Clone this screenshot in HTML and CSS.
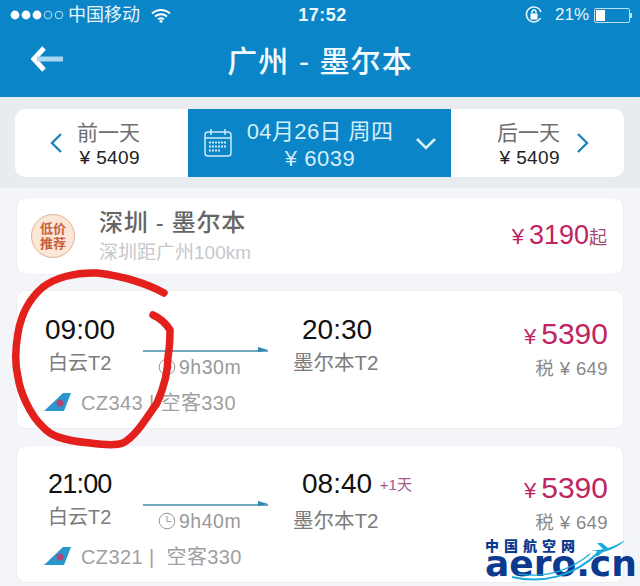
FILE: index.html
```html
<!DOCTYPE html>
<html lang="zh">
<head>
<meta charset="utf-8">
<title>广州 - 墨尔本</title>
<link rel="stylesheet" href="styles.css">
</head>
<body>
<div class="screen">
  <header class="head">
    <div class="status">
      <div class="status-left">
        <svg class="dots" width="54" height="12" viewBox="0 0 54 12"><circle cx="5" cy="6" r="4.4" fill="#fff"/><circle cx="16" cy="6" r="4.4" fill="#fff"/><circle cx="27" cy="6" r="4.4" fill="#fff"/><circle cx="38" cy="6" r="3.8" fill="none" stroke="#bfe0f2"/><circle cx="49" cy="6" r="3.8" fill="none" stroke="#bfe0f2"/></svg>
        <span class="carrier">中国移动</span>
        <svg class="wifi" width="20" height="15" viewBox="0 0 20 15"><path d="M1 5.500C6 .8 14 .8 19 5.500M4 8.600c3.500-3 8.500-3 12 0M7 11.300c1.800-1.300 4.200-1.300 6 0" fill="none" stroke="#fff" stroke-width="2"/><circle cx="10" cy="13.300" r="1.500" fill="#fff"/></svg>
      </div>
      <div class="clock">17:52</div>
      <div class="status-right">
        <svg width="20" height="20" viewBox="0 0 20 20"><path d="M16.500 13A7.500 7.500 0 1 1 17 7" fill="none" stroke="#e8f5fc" stroke-width="1.500"/><rect x="6.500" y="8.500" width="7" height="6" fill="#fff"/><path d="M8 8.500V7a2 2 0 0 1 4 0v1.500" fill="none" stroke="#fff" stroke-width="1.300"/></svg>
        <span class="pct">21%</span>
        <div class="battery"><div class="battery-fill"></div></div>
        <div class="battery-tip"></div>
      </div>
    </div>
    <div class="nav">
      <svg class="back" width="32" height="26" viewBox="0 0 32 26"><path d="M13 2 3 13l10 11" fill="none" stroke="#fff" stroke-width="5"/><path d="M6 13h26" stroke="#a9d6f0" stroke-width="5"/></svg>
      <h1 class="title">广州 - 墨尔本</h1>
    </div>
  </header>

  <div class="datewrap">
    <section class="datebar">
      <div class="day day-prev">
        <svg width="14" height="22" viewBox="0 0 14 22"><path d="M12 2 3 11l9 9" fill="none" stroke="#1c86b8" stroke-width="2.400"/></svg>
        <div class="day-text"><div class="day-name">前一天</div><div class="day-price">¥ 5409</div></div>
      </div>
      <div class="day-current">
        <svg width="30" height="30" viewBox="0 0 30 30"><rect x="2" y="4" width="26" height="24" rx="3" fill="none" stroke="#cfe9f7" stroke-width="1.500"/><path d="M2 10h26M8 1v6M22 1v6" fill="none" stroke="#cfe9f7" stroke-width="1.500"/><path d="M6 14.500h18M6 18.500h18M6 22.500h12" stroke="#cfe9f7" stroke-width="2.200" stroke-dasharray="2 1"/></svg>
        <div class="current-text"><div class="current-date">04月26日 周四</div><div class="current-price">¥ 6039</div></div>
        <svg class="chev" width="22" height="14" viewBox="0 0 22 14"><path d="M2 2l9 9 9-9" fill="none" stroke="#d8eef9" stroke-width="2.600"/></svg>
      </div>
      <div class="day day-next">
        <div class="day-text"><div class="day-name">后一天</div><div class="day-price">¥ 5409</div></div>
        <svg width="14" height="22" viewBox="0 0 14 22"><path d="M2 2l9 9-9 9" fill="none" stroke="#1c86b8" stroke-width="2.400"/></svg>
      </div>
    </section>
  </div>

  <section class="card promo">
    <div class="badge"><span>低价</span><span>推荐</span></div>
    <div class="promo-text">
      <div class="promo-route">深圳 - 墨尔本</div>
      <div class="promo-sub">深圳距广州100km</div>
    </div>
    <div class="promo-price"><span class="yen">¥</span><span class="promo-num">3190</span><span class="qi">起</span></div>
  </section>

  <section class="card flight">
    <div class="col-dep">
      <div class="time">09:00</div>
      <div class="place">白云T2</div>
      <div class="air">
        <svg class="tail" width="28" height="20" viewBox="0 0 28 20"><path d="M0 19 19 1h8l-7 18z" fill="#2a97cc"/><circle cx="16" cy="11" r="3.500" fill="#b0457a"/></svg>
        <span class="air-text">CZ343 | 空客330</span>
      </div>
    </div>
    <div class="col-mid">
      <div class="line"></div>
      <div class="dur"><svg width="18" height="18" viewBox="0 0 18 18"><circle cx="9" cy="9" r="7.800" fill="none" stroke="#999" stroke-width="1"/><path d="M9 4v5.500h4.500" fill="none" stroke="#999"/></svg><span>9h30m</span></div>
    </div>
    <div class="col-arr">
      <div class="time">20:30</div>
      <div class="place">墨尔本T2</div>
    </div>
    <div class="col-price">
      <div class="price"><span class="yen big">¥</span><span class="price-num">5390</span></div>
      <div class="tax">税 ¥ 649</div>
    </div>
  </section>

  <section class="card flight">
    <div class="col-dep">
      <div class="time">21:00</div>
      <div class="place">白云T2</div>
      <div class="air">
        <svg class="tail" width="28" height="20" viewBox="0 0 28 20"><path d="M0 19 19 1h8l-7 18z" fill="#2a97cc"/><circle cx="16" cy="11" r="3.500" fill="#b0457a"/></svg>
        <span class="air-text">CZ321 |&nbsp; 空客330</span>
      </div>
    </div>
    <div class="col-mid">
      <div class="line"></div>
      <div class="dur"><svg width="18" height="18" viewBox="0 0 18 18"><circle cx="9" cy="9" r="7.800" fill="none" stroke="#999" stroke-width="1"/><path d="M9 4v5.500h4.500" fill="none" stroke="#999"/></svg><span>9h40m</span></div>
    </div>
    <div class="col-arr">
      <div class="time">08:40 <span class="plus">+1天</span></div>
      <div class="place">墨尔本T2</div>
    </div>
    <div class="col-price">
      <div class="price"><span class="yen big">¥</span><span class="price-num">5390</span></div>
      <div class="tax">税 ¥ 649</div>
    </div>
  </section>

  <svg class="scribble" width="190" height="190" viewBox="0 260 190 190"><path d="M164 293C150 285 125 276 97 273 75 272 55 278 43 287 30 298 21 315 18 333 15 350 15 365 18 377 20 392 30 415 43 427 50 435 60 440 90 443 105 445 118 445 123 443 135 437 145 420 157 403 165 385 168 370 168 357 170 345 170 335 170 330 165 322 160 318 153 315" fill="none" stroke="#e3201b" stroke-width="7.500" stroke-linecap="round" stroke-linejoin="round"/></svg>

  <div class="mark">
    <div class="mark-cn">中国航空网</div>
    <div class="mark-en">aero.cn</div>
    <svg class="mark-plane" width="155" height="50" viewBox="0 0 155 50"><path d="M27 41c30 7 62 0 88-26" fill="none" stroke="#18a9df" stroke-width="2"/><path d="M33 38c26 4 50-2 72-20" fill="none" stroke="#18a9df" stroke-width="1.200"/><path d="M112 14c12-1 22-6 28-10-5 6-14 10-22 12l-5 4-3 0 2-5-6-1zM112 7l5 0 6 5-5 1z" fill="#18a9df"/></svg>
  </div>
</div>
</body>
</html>
```
FILE: styles.css
```css
* { box-sizing: border-box; margin: 0; padding: 0; }
html, body { width: 640px; height: 586px; overflow: hidden; }
body { background: #f4f5f8; font-family: "Liberation Sans", "Noto Sans CJK SC", sans-serif; }
.screen { position: relative; width: 640px; height: 586px; overflow: hidden; }

.head { height: 97px; background: #0a85c7; color: #fff; }
.status { height: 30px; padding: 0 4px 0 10px; display: grid; grid-template-columns: 1fr auto 1fr; align-items: center; }
.status-left { display: flex; align-items: center; gap: 4px; }
.carrier { font-size: 18px; color: #e6f4fb; line-height: 30px; }
.wifi { margin-left: 7px; }
.clock { font-size: 18px; font-weight: 700; color: #eef8fd; letter-spacing: .5px; margin-left: -1px; }
.status-right { display: flex; align-items: center; justify-content: flex-end; }
.pct { font-size: 17px; color: #e6f4fb; margin: 0 5px 0 11px; }
.battery { width: 36px; height: 15px; border: 1px solid #bfe0f2; border-radius: 2px; padding: 1px; }
.battery-fill { width: 9px; height: 100%; background: #fff; }
.battery-tip { width: 2px; height: 5px; background: #bfe0f2; margin-right: 4px; }

.nav { height: 67px; padding: 0 0 3px 31px; display: flex; align-items: center; position: relative; }
.title { position: absolute; left: 0; right: 0; top: 11px; text-align: center; font-size: 30px; font-weight: 500; line-height: 42px; color: #f3fafe; letter-spacing: 1.100px; }
.back { position: relative; top: -3px; }

.datewrap { height: 91px; padding-top: 12px; background: #e9ecef; }
.datebar { margin: 0 16px 0 15px; height: 68px; display: grid; grid-template-columns: 173px 263px 173px; }
.day { background: #fff; display: flex; align-items: center; }
.day-prev { border-radius: 10px 0 0 10px; padding-left: 34px; gap: 14px; }
.day-next { border-radius: 0 10px 10px 0; padding-left: 46px; gap: 16px; }
.day-text { text-align: right; }
.day-name { font-size: 21px; line-height: 30px; color: #6e6e6e; position: relative; top: 1px; }
.day-price { font-size: 19px; line-height: 22px; color: #222; letter-spacing: .4px; }
.day-current { background: #0a85c7; display: flex; align-items: center; padding: 0 14px 0 15px; }
.current-text { flex: 1; text-align: center; color: #d5eefa; padding-right: 8px; padding-top: 3px; }
.current-date { font-size: 22px; line-height: 28px; letter-spacing: .4px; }
.current-price { font-size: 22px; line-height: 26px; letter-spacing: .5px; }
.chev { flex: none; position: relative; top: 1px; }

.card { margin: 16px 16px 0; background: #fff; border: 1px solid #eceef2; border-radius: 10px; display: flex; }
.datewrap + .card { margin-top: 9px; }
.promo { height: 78px; align-items: center; padding: 0 14px 0 14px; }
.badge { width: 44px; height: 44px; border-radius: 50%; background: #fae7d8; border: 1px solid #e0b394; display: flex; flex-direction: column; align-items: center; justify-content: center; color: #c9603a; font-size: 13px; line-height: 15px; font-weight: 700; flex: none; }
.promo-text { margin-left: 24px; flex: 1; }
.promo-route { font-size: 24px; line-height: 34px; color: #666; font-weight: 500; letter-spacing: .7px; }
.promo-sub { font-size: 19px; line-height: 26px; color: #c6c8cc; }
.promo-price { color: #c02462; display: flex; align-items: baseline; padding-right: 2px; padding-bottom: 2px; }
.yen { font-size: 22px; margin-right: 5px; }
.promo-num { font-size: 27px; }
.qi { font-size: 18px; color: #a54a74; }

.flight { height: 138px; padding: 23px 15px 0 28px; }
.promo + .flight { margin-top: 15px; height: 139px; padding-top: 24px; }
.col-dep { width: 98px; }
.time { font-size: 28px; line-height: 30px; color: #111; white-space: nowrap; }
.flight + .flight .col-dep .time { padding-left: 3px; letter-spacing: -.8px; font-size: 27px; }
.place { font-size: 20.500px; line-height: 26px; margin-top: 5px; color: #7b7b7b; white-space: nowrap; }
.col-dep .place { padding-left: 3px; font-size: 20px; }
.air { display: flex; align-items: center; gap: 9px; margin-top: 11px; margin-left: -1px; white-space: nowrap; }
.air-text { font-size: 20px; color: #a0a0a0; letter-spacing: .4px; }
.tail { flex: none; }
.col-mid { width: 125px; padding-top: 35px; }
.line { height: 2px; background: #6fa9bd; position: relative; }
.line::after { content: ""; position: absolute; right: 0; top: -3px; border-left: 10px solid #2a86b5; border-top: 3px solid transparent; border-bottom: 2px solid transparent; }
.dur { display: flex; align-items: center; gap: 3px; padding-left: 15px; margin-top: 2px; font-size: 19.500px; line-height: 26px; color: #999; letter-spacing: .5px; }
.col-arr { margin-left: 25px; width: 150px; }
.col-arr .time { padding-left: 9px; }
.plus { font-size: 15px; color: #a5588a; position: relative; top: -3px; }
.col-price { margin-left: auto; text-align: right; padding-top: 3px; }
.price { color: #c02462; display: flex; align-items: baseline; justify-content: flex-end; }
.big { font-size: 22px; margin-right: 5px; }
.price-num { font-size: 30px; line-height: 32px; }
.tax { font-size: 18.500px; line-height: 26px; margin-top: 6px; color: #888; letter-spacing: .4px; white-space: nowrap; }

.scribble { position: absolute; left: 0; top: 260px; }

.mark { position: absolute; left: 485px; top: 536px; width: 155px; height: 50px; }
.mark-cn { position: absolute; left: 0; top: 4px; font-size: 14px; line-height: 13px; font-weight: 900; color: #0b3a8f; letter-spacing: 5px; white-space: nowrap; }
.mark-en { position: absolute; left: 0; top: 18px; font-family: "DejaVu Sans", sans-serif; font-size: 36px; line-height: 20px; font-weight: 700; color: #0b3a8f; white-space: nowrap; }
.mark-plane { position: absolute; left: 0; top: 0; }
```
